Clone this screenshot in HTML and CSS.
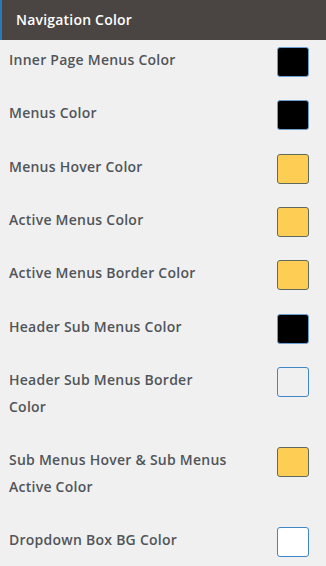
FILE: index.html
```html
<!DOCTYPE html>
<html lang="en">
<head>
    <meta charset="UTF-8">
    <title>Navigation Color</title>
    <link rel="stylesheet" href="styles.css">
</head>
<body>

    <div class="panel">
        <h3 class="panel-title">Navigation Color</h3>

        <div class="options">
            <div class="option-row">
                <span class="option-label">Inner Page Menus Color</span>
                <button class="swatch swatch-black"></button>
            </div>
            <div class="option-row">
                <span class="option-label">Menus Color</span>
                <button class="swatch swatch-black"></button>
            </div>
            <div class="option-row">
                <span class="option-label">Menus Hover Color</span>
                <button class="swatch swatch-yellow"></button>
            </div>
            <div class="option-row">
                <span class="option-label">Active Menus Color</span>
                <button class="swatch swatch-yellow"></button>
            </div>
            <div class="option-row">
                <span class="option-label">Active Menus Border Color</span>
                <button class="swatch swatch-yellow"></button>
            </div>
            <div class="option-row">
                <span class="option-label">Header Sub Menus Color</span>
                <button class="swatch swatch-black"></button>
            </div>
            <div class="option-row">
                <span class="option-label">Header Sub Menus Border Color</span>
                <button class="swatch swatch-empty"></button>
            </div>
            <div class="option-row">
                <span class="option-label">Sub Menus Hover &amp; Sub Menus Active Color</span>
                <button class="swatch swatch-yellow"></button>
            </div>
            <div class="option-row">
                <span class="option-label">Dropdown Box BG Color</span>
                <button class="swatch swatch-white"></button>
            </div>
        </div>
    </div>

</body>
</html>
```

FILE: styles.css
```css
/* General Reset */
* {
    margin: 0;
    padding: 0;
    box-sizing: border-box;
}

body, html {
    font-family: 'Open Sans', 'Liberation Sans', sans-serif;
    background: #f0f0f0;
    color: #50555a;
    overflow: hidden;
}

/* Section title bar */
.panel-title {
    height: 40px;
    line-height: 40px;
    padding-left: 14px;
    background: #4a4543;
    border-left: 2px solid #2a7ab8;
    color: #ffffff;
    font-size: 14px;
    font-weight: 600;
    letter-spacing: 0.2px;
}

/* Option list */
.options {
    padding-top: 7px;
}

.option-row {
    display: flex;
    justify-content: space-between;
    align-items: flex-start;
    padding: 0 17px 26.67px 9px;
}

.option-label {
    width: 221px;
    font-size: 14px;
    font-weight: 600;
    line-height: 26.67px;
    letter-spacing: 0.25px;
}

/* Color swatches */
.swatch {
    width: 32px;
    height: 30px;
    margin-bottom: -3.33px;
    border-radius: 3px;
    border: 1px solid #6a9fd0;
    -webkit-appearance: none;
}

.swatch-black {
    background: #000000;
}

.swatch-yellow {
    background: #fece54;
    border-color: #5d6a5c;
}

.swatch-empty {
    background: #f0f0f0;
    border-color: #3f87c6;
}

.swatch-white {
    background: #ffffff;
    border-color: #3f87c6;
}
```
